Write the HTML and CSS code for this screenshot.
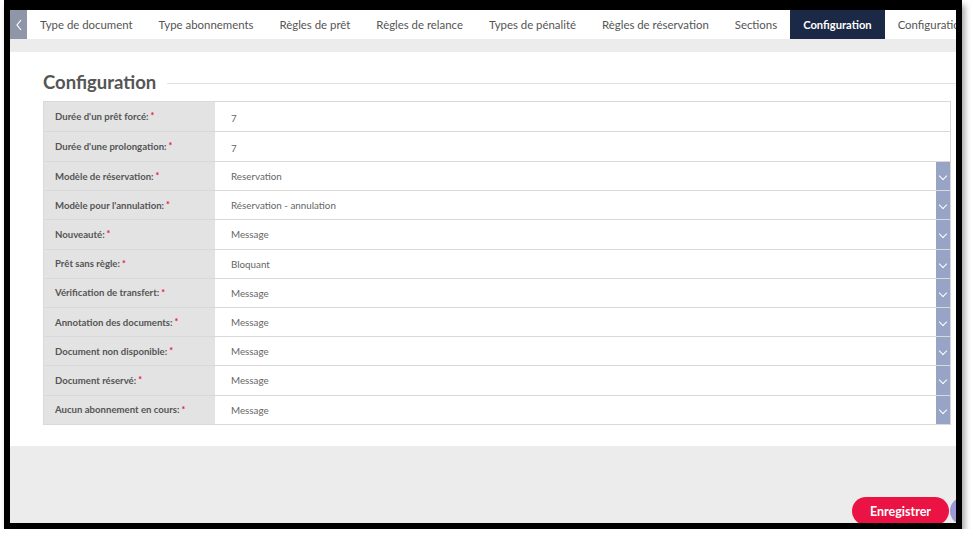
FILE: index.html
```html
<!DOCTYPE html>
<html lang="fr">
<head>
  <meta charset="UTF-8">
  <title>Configuration</title>
  <meta name="viewport" content="width=device-width, initial-scale=1.0">
  <link rel="stylesheet" href="styles.css">
</head>
<body>
  <div class="frame">
    <nav class="tabs">
      <button class="tab-prev">
        <svg width="8" height="12" viewBox="0 0 8 12"><path d="M6 1 L2 6 L6 11" fill="none" stroke="#fff" stroke-width="1.2"/></svg>
      </button>
      <a href="#">Type de document</a>
      <a href="#">Type abonnements</a>
      <a href="#">Règles de prêt</a>
      <a href="#">Règles de relance</a>
      <a href="#">Types de pénalité</a>
      <a href="#">Règles de réservation</a>
      <a href="#">Sections</a>
      <a href="#" class="active">Configuration</a>
      <a href="#" class="last">Configuration</a>
    </nav>
    <div class="strip"></div>

    <main class="panel">
      <h2 class="panel-title"><span>Configuration</span></h2>
      <div class="form">
        <div class="row tall">
          <label>Durée d'un prêt forcé: <i>*</i></label>
          <div class="value">7</div>
        </div>
        <div class="row tall">
          <label>Durée d'une prolongation: <i>*</i></label>
          <div class="value">7</div>
        </div>
        <div class="row">
          <label>Modèle de réservation: <i>*</i></label>
          <div class="value select">Reservation<span class="arrow"></span></div>
        </div>
        <div class="row">
          <label>Modèle pour l'annulation: <i>*</i></label>
          <div class="value select">Réservation - annulation<span class="arrow"></span></div>
        </div>
        <div class="row">
          <label>Nouveauté: <i>*</i></label>
          <div class="value select">Message<span class="arrow"></span></div>
        </div>
        <div class="row">
          <label>Prêt sans règle: <i>*</i></label>
          <div class="value select">Bloquant<span class="arrow"></span></div>
        </div>
        <div class="row">
          <label>Vérification de transfert: <i>*</i></label>
          <div class="value select">Message<span class="arrow"></span></div>
        </div>
        <div class="row">
          <label>Annotation des documents: <i>*</i></label>
          <div class="value select">Message<span class="arrow"></span></div>
        </div>
        <div class="row">
          <label>Document non disponible: <i>*</i></label>
          <div class="value select">Message<span class="arrow"></span></div>
        </div>
        <div class="row">
          <label>Document réservé: <i>*</i></label>
          <div class="value select">Message<span class="arrow"></span></div>
        </div>
        <div class="row">
          <label>Aucun abonnement en cours: <i>*</i></label>
          <div class="value select">Message<span class="arrow"></span></div>
        </div>
      </div>
    </main>

    <footer class="actions">
      <button class="save">Enregistrer</button>
      <span class="round"></span>
    </footer>
  </div>
</body>
</html>
```

FILE: styles.css
```css
body {
  margin: 0;
  padding: 0;
  background-color: #fff;
  font-family: Lato, "Open Sans", sans-serif;
  color: #555;
}
.frame {
  width: 946px;
  height: 513px;
  margin-left: 4px;
  border-style: solid;
  border-color: #000;
  border-width: 10px 6px 6px 6px;
  overflow: hidden;
  background-color: #ececec;
  box-shadow: 3px 5px 6px rgba(0,0,0,0.35);
  display: flex;
  flex-direction: column;
}
.tabs {
  display: flex;
  height: 29px;
  background-color: #fff;
  white-space: nowrap;
  flex-shrink: 0;
  overflow: hidden;
}
.tab-prev {
  width: 17px;
  border: none;
  padding: 0;
  background-color: #8e96a8;
  display: flex;
  align-items: center;
  justify-content: center;
  flex-shrink: 0;
}
.tabs a {
  display: flex;
  align-items: center;
  padding: 0 13px;
  font-size: 11.4px;
  color: #555;
  text-decoration: none;
  flex-shrink: 0;
}
.tabs a.active {
  background-color: #1b2846;
  color: #fff;
  font-weight: bold;
  font-size: 11.2px;
}
.tabs a.last {
  flex-shrink: 1;
  min-width: 0;
  overflow: hidden;
  padding-right: 0;
}
.strip {
  height: 13px;
  flex-shrink: 0;
}
.panel {
  background-color: #fff;
  height: 394px;
  padding: 20px 0 0 33px;
  box-sizing: border-box;
  flex-shrink: 0;
}
.panel-title {
  display: flex;
  align-items: center;
  margin: 0 0 9px 0;
  height: 20px;
  font-size: 18.5px;
  font-weight: bold;
  color: #555;
}
.panel-title::after {
  content: "";
  flex: 1;
  height: 1px;
  background-color: #e2e2e2;
  margin-left: 11px;
  margin-top: 2px;
}
.form {
  width: 906px;
  border: 1px solid #d9d9d9;
  border-bottom: none;
}
.row {
  display: grid;
  grid-template-columns: 171px 1fr;
  height: 29.2px;
  border-bottom: 1px solid #d9d9d9;
  box-sizing: border-box;
}
.row.tall {
  height: 30px;
}
.row label {
  background-color: #e3e3e3;
  display: flex;
  align-items: center;
  padding-left: 11px;
  font-size: 9.6px;
  font-weight: bold;
  color: #555;
}
.row label i {
  color: #e8103f;
  font-style: normal;
  margin-left: 2px;
  font-size: 9px;
  align-self: flex-start;
  margin-top: 8px;
}
.value {
  display: flex;
  align-items: center;
  padding-left: 16px;
  font-size: 9.8px;
  color: #666;
  position: relative;
}
.tall .value {
  padding-top: 2px;
}
.select .arrow {
  position: absolute;
  right: 0;
  top: 0;
  bottom: 0;
  width: 14px;
  background-color: #98a4c5;
}
.select .arrow::after {
  content: "";
  position: absolute;
  left: 4px;
  top: 11px;
  width: 5px;
  height: 5px;
  border-right: 1px solid #fff;
  border-bottom: 1px solid #fff;
  transform: rotate(45deg);
}
.actions {
  flex: 1;
  display: flex;
  justify-content: flex-end;
  align-items: flex-end;
  gap: 1px;
}
.save {
  width: 97px;
  height: 28px;
  margin-bottom: -2px;
  border: none;
  border-radius: 14px;
  background-color: #ea1343;
  color: #fff;
  font-family: Lato, "Open Sans", sans-serif;
  font-size: 12.5px;
  font-weight: bold;
}
.round {
  width: 28px;
  height: 28px;
  margin-right: -22px;
  margin-bottom: -2px;
  border-radius: 50%;
  background-color: #9c9bd6;
}
```
